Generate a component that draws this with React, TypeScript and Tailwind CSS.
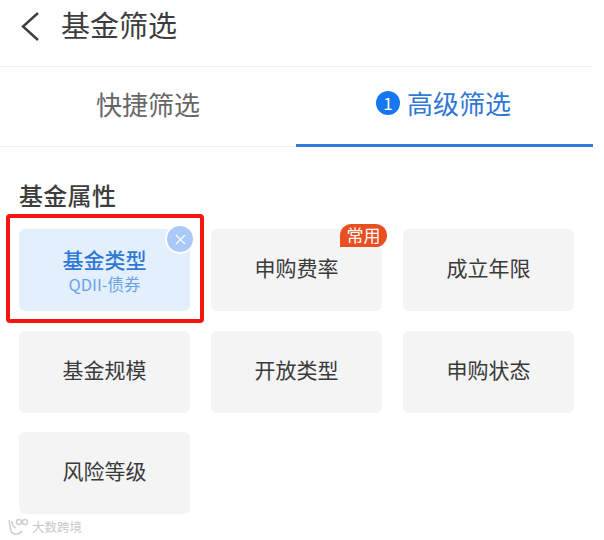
import React, { FC } from "react";
import { X } from "lucide-react";

interface IpropsFilterCard {
  title: string;
  sub?: string;
  active?: boolean;
  badge?: string;
}

const FilterCard: FC<IpropsFilterCard> = ({ title, sub, active, badge }) => {
  return (
    <div
      className={`relative h-[82px] rounded-[6px] flex flex-col items-center justify-center ${
        active ? "bg-[#e3effd]" : "bg-[#f4f4f5] pb-[6px]"
      }`}
    >
      <p className={`text-[21px] leading-[28px] ${active ? "text-[#2f78d6] font-medium" : "text-[#3a3a3a]"}`}>{title}</p>
      {sub && <p className="text-[16.5px] leading-[22px] text-[#6ba3e8]">{sub}</p>}

      {active && (
        <div className="absolute -top-[5px] -right-[5px] w-[30px] h-[30px] rounded-full bg-[#a9c9f8] border-2 border-white flex items-center justify-center">
          <X size={17} strokeWidth={1.6} color="#ffffff" />
        </div>
      )}
      {active && <div className="absolute -top-[15px] -left-[13px] w-[198px] h-[109px] rounded-[4px] border-[4px] border-[#f5160f]" />}
      {badge && (
        <div className="absolute -top-[5px] -right-[5px] h-[23px] w-[47px] rounded-full rounded-bl-[4px] bg-[#ea4f1f] text-white text-[17px] leading-[22px] text-center">
          {badge}
        </div>
      )}
    </div>
  );
};

const App: FC = () => {
  return (
    <div
      className="w-[604px] h-[540px] bg-white overflow-hidden relative"
      style={{ fontFamily: '"Noto Sans CJK SC", "Noto Sans", sans-serif' }}
    >
      <div className="w-[593px]">
        <div className="h-[67px] border-b border-[#f0f0f0] flex items-center pl-[20px] pb-[13px]">
          <svg width="20" height="32" viewBox="0 0 20 32" fill="none" stroke="#3d3d3d" strokeWidth="2.4">
            <path d="M18 2 L3 15.5 L18 29" />
          </svg>
          <h1 className="ml-[21px] mb-[5px] text-[29px] leading-[38px] text-[#3d3d3d]">基金筛选</h1>
        </div>

        <div className="h-[80px] border-b border-[#f0f0f0] flex">
          <div className="w-[296px] flex items-center justify-center pb-[6px] text-[26px] text-[#666666]">
            快捷筛选
          </div>
          <div className="w-[297px] -mb-px border-b-[3px] border-[#3279dc] flex items-center justify-center pr-[2px] pb-[6px]">
            <span className="w-[24px] h-[24px] rounded-full bg-[#1677f0] text-white text-[17px] leading-[24px] text-center mr-[7px]">
              1
            </span>
            <span className="text-[26px] text-[#2f78d6]">高级筛选</span>
          </div>
        </div>

        <div className="px-[19px] pt-[31px]">
          <h2 className="text-[24px] leading-[34px] tracking-[0.3px] font-medium text-[#3d3d3d] mb-[17px]">基金属性</h2>
          <div className="grid grid-cols-3 gap-x-[21px] gap-y-[19.5px]">
            <FilterCard title="基金类型" sub="QDII-债券" active />
            <FilterCard title="申购费率" badge="常用" />
            <FilterCard title="成立年限" />
            <FilterCard title="基金规模" />
            <FilterCard title="开放类型" />
            <FilterCard title="申购状态" />
            <FilterCard title="风险等级" />
          </div>
        </div>
      </div>

      <div className="absolute left-[7px] top-[518px] flex items-center">
        <svg width="24" height="18" viewBox="0 0 24 18" fill="none" stroke="#cfcfcf" strokeWidth="1.5">
          <path d="M2 2 L4 13 Q5 16 9 16 Q13 16 15 13" />
          <path d="M5 3 Q5 9 9 10" />
          <circle cx="12" cy="4" r="2.5" />
          <circle cx="18" cy="4" r="2.5" />
        </svg>
        <span className="ml-[1px] text-[12.5px] leading-[16px] text-[#c8c8c8]">大数跨境</span>
      </div>
    </div>
  );
};

export default App;
